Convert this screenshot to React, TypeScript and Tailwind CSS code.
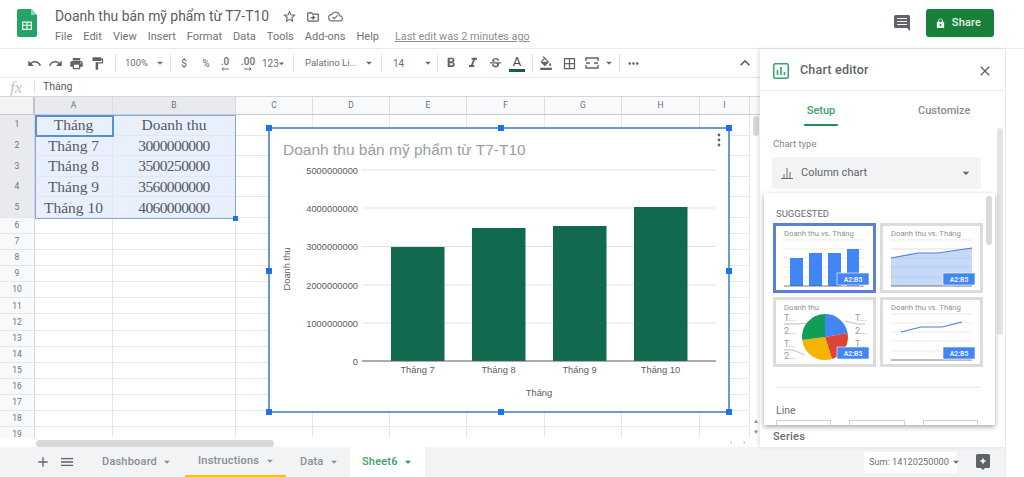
import {
    MdAdd,
    MdArrowDropDown,
    MdBorderAll,
    MdClose,
    MdExpandLess,
    MdFormatBold,
    MdFormatColorFill,
    MdFormatItalic,
    MdFormatPaint,
    MdLock,
    MdMenu,
    MdMoreHoriz,
    MdOutlineCloudDone,
    MdOutlineDriveFileMove,
    MdPrint,
    MdRedo,
    MdStarBorder,
    MdStrikethroughS,
    MdUndo,
} from 'react-icons/md';

const menus = ['File', 'Edit', 'View', 'Insert', 'Format', 'Data', 'Tools', 'Add-ons', 'Help'];
const columns = [
    { name: 'A', width: 78 },
    { name: 'B', width: 123 },
    { name: 'C', width: 77 },
    { name: 'D', width: 77 },
    { name: 'E', width: 77 },
    { name: 'F', width: 78 },
    { name: 'G', width: 77 },
    { name: 'H', width: 78 },
    { name: 'I', width: 50 },
];
const data = [
    ['Tháng', 'Doanh thu'],
    ['Tháng 7', '3000000000'],
    ['Tháng 8', '3500250000'],
    ['Tháng 9', '3560000000'],
    ['Tháng 10', '4060000000'],
];
const bars = [
    { label: 'Tháng 7', x: 391, top: 247 },
    { label: 'Tháng 8', x: 472, top: 228 },
    { label: 'Tháng 9', x: 553, top: 226 },
    { label: 'Tháng 10', x: 634, top: 207 },
];
const ticks = [
    { label: '5000000000', y: 170 },
    { label: '4000000000', y: 208 },
    { label: '3000000000', y: 246.5 },
    { label: '2000000000', y: 285 },
    { label: '1000000000', y: 323 },
];
const rowNumbers = Array.from({ length: 19 }, (_, i) => i + 1);
const handles = [
    'left-[-4px] top-[-4px]',
    'left-[228px] top-[-4px]',
    'right-[-4px] top-[-4px]',
    'left-[-4px] top-[139px]',
    'right-[-4px] top-[139px]',
    'left-[-4px] bottom-[-4px]',
    'left-[228px] bottom-[-4px]',
    'right-[-4px] bottom-[-4px]',
];

function Separator() {
    return <div className="mx-[5px] h-[18px] w-px shrink-0 bg-[#e0e2e4]" />;
}

function ToolIcon({ children, width = 21 }: { children: React.ReactNode; width?: number }) {
    return (
        <div className="flex h-full shrink-0 items-center justify-center text-[#5f6368]" style={{ width }}>
            {children}
        </div>
    );
}

function TinyArrow({ flip = false }: { flip?: boolean }) {
    return (
        <svg width="8" height="4" viewBox="0 0 8 4" fill="none" stroke="#5f6368" strokeWidth="0.9" className={flip ? 'rotate-180' : ''}>
            <path d="M8 2H1M2.500 .5L1 2l1.500 1.500" />
        </svg>
    );
}

function Toolbar() {
    return (
        <div className="flex h-[29px] shrink-0 items-center whitespace-nowrap border-b border-[#e3e4e6] pl-[24px] text-[10px] text-[#6b6f73]">
            <ToolIcon><MdUndo size={15} /></ToolIcon>
            <ToolIcon><MdRedo size={15} /></ToolIcon>
            <ToolIcon><MdPrint size={15} /></ToolIcon>
            <ToolIcon><MdFormatPaint size={15} /></ToolIcon>
            <div className="ml-[2px]"><Separator /></div>
            <span className="ml-[4px] w-[22px] text-[9.5px]">100%</span>
            <MdArrowDropDown size={14} className="ml-[6px]" />
            <div className="-ml-[2px]"><Separator /></div>
            <ToolIcon width={16}>$</ToolIcon>
            <div className="ml-[6px]"><ToolIcon width={16}>%</ToolIcon></div>
            <div className="ml-[4px] flex w-[14px] flex-col items-center font-medium leading-[11px]">
                .0<TinyArrow />
            </div>
            <div className="ml-[6px] flex w-[20px] flex-col items-center font-medium leading-[11px]">
                .00<TinyArrow flip />
            </div>
            <span className="ml-[4px] w-[16px]">123</span>
            <MdArrowDropDown size={13} className="-ml-[3px]" />
            <Separator />
            <span className="ml-[6px] w-[50px] text-[9.5px]">Palatino Li...</span>
            <MdArrowDropDown size={14} className="ml-[7px]" />
            <Separator />
            <span className="ml-[6px] w-[10px]">14</span>
            <MdArrowDropDown size={14} className="ml-[18px]" />
            <div className="-ml-[3px]"><Separator /></div>
            <ToolIcon width={16}><MdFormatBold size={16} /></ToolIcon>
            <div className="ml-[3px]"><ToolIcon width={22}><MdFormatItalic size={16} /></ToolIcon></div>
            <ToolIcon width={22}><MdStrikethroughS size={15} /></ToolIcon>
            <div className="flex w-[22px] flex-col items-center text-[#44474a]">
                <span className="text-[13px] leading-[13px]">A</span>
                <div className="mt-[1px] h-[3px] w-[16px] bg-[#1a5c46]" />
            </div>
            <div className="-ml-[1px]"><Separator /></div>
            <ToolIcon width={16}><MdFormatColorFill size={14} /></ToolIcon>
            <div className="ml-[4px]"><ToolIcon width={22}><MdBorderAll size={15} /></ToolIcon></div>
            <ToolIcon width={24}>
                <svg width="14" height="12" viewBox="0 0 14 12" fill="none" stroke="currentColor" strokeWidth="1.4">
                    <path d="M1 4V1h12v3M1 8v3h12V8M1 6h4M9 6h4" />
                </svg>
            </ToolIcon>
            <MdArrowDropDown size={14} className="-ml-[2px]" />
            <div className="-ml-[2px]"><Separator /></div>
            <ToolIcon width={16}><MdMoreHoriz size={15} /></ToolIcon>
            <div className="ml-auto mr-[5px] text-[#5f6368]"><MdExpandLess size={20} /></div>
        </div>
    );
}

function FormulaBar() {
    return (
        <div className="flex h-[18px] shrink-0 items-center">
            <span className="w-[34px] pl-[10px] font-['Liberation_Serif',serif] text-[17px] italic leading-none text-[#c4c7c9]">fx</span>
            <div className="h-[13px] w-px bg-[#e0e2e4]" />
            <span className="ml-[8px] text-[10.5px] text-[#55585c]">Tháng</span>
        </div>
    );
}

function SheetGrid() {
    return (
        <div className="relative flex-1 overflow-hidden border-t border-[#d5d7d9]">
            <div className="flex h-[18px] border-b border-[#c9cbce] bg-[#f8f9fa]">
                <div className="h-full w-[35px] shrink-0 border-r-[2px] border-[#c0c3c6] bg-[#f3f4f5]" />
                {columns.map((col) => (
                    <div
                        key={col.name}
                        className={`flex shrink-0 items-center justify-center border-r border-[#dcdee0] text-[8.5px] text-[#6f7275] ${col.name === 'A' || col.name === 'B' ? 'bg-[#e8eaed]' : ''}`}
                        style={{ width: col.width }}
                    >
                        {col.name}
                    </div>
                ))}
            </div>
            {rowNumbers.map((n) => (
                <div key={n} className={`flex border-b border-[#e6e7e8] ${n <= 5 ? 'h-[20.6px]' : 'h-[16.08px]'}`}>
                    <div className={`flex w-[35px] shrink-0 items-center justify-center border-r border-[#d6d8da] text-[8.5px] text-[#6f7275] ${n <= 5 ? 'bg-[#e8eaed]' : 'bg-[#f8f9fa]'}`}>
                        {n}
                    </div>
                    {columns.map((col, i) => (
                        <div
                            key={col.name}
                            className={`flex shrink-0 items-center justify-center border-r border-[#e6e7e8] font-['Liberation_Serif',serif] text-[15.5px] text-[#565b5f] ${n <= 5 && i < 2 ? 'bg-[#e8f0fe]' : ''} ${i === 1 && n > 1 ? 'tracking-[-0.6px]' : ''}`}
                            style={{ width: col.width }}
                        >
                            {n <= 5 && i < 2 ? data[n - 1][i] : null}
                        </div>
                    ))}
                </div>
            ))}

            {/* selected range */}
            <div className="absolute left-[35px] top-[18px] h-[104px] w-[201px] border border-[#7fa8de]">
                <div className="absolute left-[-1px] top-[-1px] h-[22px] w-[79px] border-[2px] border-[#5a90d8]" />
                <div className="absolute bottom-[-3px] right-[-3px] h-[5px] w-[5px] bg-[#1a73e8]" />
            </div>

            {/* chart */}
            <div className="absolute left-[268px] top-[30px] h-[286px] w-[462px] border-2 border-[#6a99d4] bg-white">
                <svg width="458" height="282" viewBox="270 129 458 282">
                    <text x="283" y="155" fontSize="15.500" fill="#9b9d9f" fontFamily="Liberation Sans, sans-serif">
                        Doanh thu bán mỹ phẩm từ T7-T10
                    </text>
                    {ticks.map((t) => (
                        <g key={t.label}>
                            <line x1="362" x2="716" y1={t.y} y2={t.y} stroke="#e2e3e3" />
                            <text x="358" y={t.y + 3.5} textAnchor="end" fontSize="9.3" fill="#5a5d60" fontFamily="Liberation Sans, sans-serif">
                                {t.label}
                            </text>
                        </g>
                    ))}
                    <text x="358" y="364.5" textAnchor="end" fontSize="9.3" fill="#5a5d60" fontFamily="Liberation Sans, sans-serif">0</text>
                    {bars.map((b) => (
                        <g key={b.label}>
                            <rect x={b.x} y={b.top} width="53.5" height={361 - b.top} fill="#116a4f" />
                            <text x={b.x + 26.5} y="373" textAnchor="middle" fontSize="9.3" fill="#5a5d60" fontFamily="Liberation Sans, sans-serif">
                                {b.label}
                            </text>
                        </g>
                    ))}
                    <line x1="362" x2="716" y1="361" y2="361" stroke="#55585a" />
                    <text x="539" y="396" textAnchor="middle" fontSize="9.3" fill="#5a5d60" fontFamily="Liberation Sans, sans-serif">Tháng</text>
                    <text x="290" y="269" textAnchor="middle" fontSize="9.3" fill="#5a5d60" fontFamily="Liberation Sans, sans-serif" transform="rotate(-90 290 269)">
                        Doanh thu
                    </text>
                    <g fill="#5f6368">
                        <circle cx="719" cy="135" r="1.4" />
                        <circle cx="719" cy="140" r="1.4" />
                        <circle cx="719" cy="145" r="1.4" />
                    </g>
                </svg>
                {handles.map((h) => (
                    <div key={h} className={`absolute h-[6px] w-[6px] bg-[#1a73e8] ${h}`} />
                ))}
            </div>

            {/* scroll bars */}
            <div className="absolute bottom-0 left-0 right-0 h-[9px] bg-white">
                <div className="absolute bottom-0 left-[36px] h-[7px] w-[238px] rounded-full bg-[#d6d8da]" />
                <span className="absolute bottom-0 left-[730px] text-[7px] leading-[8px] text-[#8a8d90]">‹</span>
                <span className="absolute bottom-0 left-[743px] text-[7px] leading-[8px] text-[#8a8d90]">›</span>
            </div>
            <div className="absolute bottom-0 right-0 top-[18px] w-[10px] bg-white">
                <div className="ml-[3px] mt-px h-[20px] w-[6px] rounded-full bg-[#d6d8da]" />
                <span className="absolute bottom-[23px] left-[3px] text-[6px] leading-none text-[#8a8d90]">▲</span>
                <span className="absolute bottom-[12px] left-[3px] text-[6px] leading-none text-[#8a8d90]">▼</span>
            </div>
        </div>
    );
}

function Badge({ x }: { x: number }) {
    return (
        <g>
            <rect x={x} y="50" width="32" height="12" fill="#4285f4" stroke="#fff" strokeWidth="0.6" />
            <text x={x + 16} y="59" textAnchor="middle" fontSize="6.8" fontWeight="700" fill="#e8f0fe" fontFamily="Roboto, sans-serif">
                A2:B5
            </text>
        </g>
    );
}

function ThumbLines({ title = 'Doanh thu vs. Tháng', x1 = 11, x2 = 92 }: { title?: string; x1?: number; x2?: number }) {
    return (
        <g>
            <text x={x1} y="13" fontSize="7.7" fill="#8f9194" fontFamily="Roboto, sans-serif">{title}</text>
            <line x1={x1} x2={x2} y1="17" y2="17" stroke="#dcdcdc" strokeWidth="0.7" />
        </g>
    );
}

function ThumbBars() {
    return (
        <svg viewBox="0 0 103 70" className="h-[70px] w-[103px]">
            <ThumbLines />
            {[26, 35, 44, 54].map((y) => (
                <line key={y} x1="11" x2="91" y1={y} y2={y} stroke="#e2e2e2" strokeWidth="0.7" />
            ))}
            <rect x="17" y="35" width="13" height="28" fill="#4285f4" />
            <rect x="36" y="30" width="13" height="33" fill="#4285f4" />
            <rect x="55" y="30" width="13" height="33" fill="#4285f4" />
            <rect x="74" y="26" width="12" height="37" fill="#4285f4" />
            <line x1="11" x2="91" y1="63" y2="63" stroke="#55585a" strokeWidth="0.8" />
            <Badge x={64} />
        </svg>
    );
}

function ThumbArea() {
    return (
        <svg viewBox="0 0 103 70" className="h-[70px] w-[103px]">
            <ThumbLines />
            <path d="M11 35 L38 30 L58 30 L92 25 V63 H11 Z" fill="#c6d9f8" />
            {[26, 35, 44, 54].map((y) => (
                <line key={y} x1="11" x2="92" y1={y} y2={y} stroke="#aebfd8" strokeWidth="0.5" />
            ))}
            <path d="M11 35 L38 30 L58 30 L92 25" fill="none" stroke="#4a80dc" strokeWidth="1.2" />
            <line x1="11" x2="92" y1="63" y2="63" stroke="#55585a" strokeWidth="0.8" />
            <Badge x={63} />
        </svg>
    );
}

function ThumbPie() {
    return (
        <svg viewBox="0 0 103 70" className="h-[70px] w-[103px]">
            <text x="11" y="13" fontSize="7.7" fill="#8f9194" fontFamily="Roboto, sans-serif">Doanh thu</text>
            <g fontSize="9" fill="#9a9c9e" fontFamily="Roboto, sans-serif">
                <text x="11" y="24">T...</text>
                <text x="11" y="37">2...</text>
                <text x="11" y="50">T...</text>
                <text x="11" y="62">2...</text>
                <text x="82" y="24">T...</text>
                <text x="82" y="37">2...</text>
                <text x="82" y="50">T...</text>
            </g>
            <g fill="none" stroke="#b5b6b8" strokeWidth="0.9">
                <path d="M11 27 H24 L34 26" />
                <path d="M11 53 H20 L32 58" />
                <path d="M92 27 H84 L72 24" />
            </g>
            <path d="M52 40 L52 17 A23 23 0 0 1 74.6 36 Z" fill="#4285f4" />
            <path d="M52 40 L74.6 36 A23 23 0 0 1 59 62 Z" fill="#db4437" />
            <path d="M52 40 L59 62 A23 23 0 0 1 29.2 43 Z" fill="#f4b400" />
            <path d="M52 40 L29.2 43 A23 23 0 0 1 52 17 Z" fill="#0f9d58" />
            <Badge x={64} />
        </svg>
    );
}

function ThumbLine() {
    return (
        <svg viewBox="0 0 103 70" className="h-[70px] w-[103px]">
            <ThumbLines />
            {[26, 35, 44, 54].map((y) => (
                <line key={y} x1="11" x2="92" y1={y} y2={y} stroke="#e2e2e2" strokeWidth="0.7" />
            ))}
            <path d="M21 35 L41 30 L62 30 L82 25" fill="none" stroke="#4a80dc" strokeWidth="1.2" />
            <line x1="11" x2="92" y1="63" y2="63" stroke="#55585a" strokeWidth="0.8" />
            <Badge x={63} />
        </svg>
    );
}

function ChartEditor() {
    return (
        <aside className="relative z-10 flex h-full w-[245px] shrink-0 flex-col bg-white shadow-[-2px_0_4px_rgba(0,0,0,0.1)]">
            <div className="flex h-[42px] shrink-0 items-center border-b border-[#e8eaed] pl-[13px] pr-[12px] pt-[2px]">
                <svg width="16" height="16" viewBox="0 0 16 16" fill="none">
                    <rect x="0.75" y="0.75" width="14.5" height="14.5" rx="1.5" stroke="#34a36b" strokeWidth="1.5" />
                    <path d="M4.5 7v5M8 4v8M11.5 9v3" stroke="#34a36b" strokeWidth="1.6" />
                </svg>
                <span className="ml-[11px] text-[12.5px] font-medium tracking-[0.2px] text-[#5f6368]">Chart editor</span>
                <MdClose size={16} className="ml-auto text-[#5f6368]" />
            </div>
            <div className="flex h-[38px] shrink-0 text-[11px] font-medium">
                <div className="ml-[44px] flex w-[34px] flex-col items-center pt-[12px] text-[#3c9f6c]">
                    Setup
                    <div className="mt-[4px] h-[2px] w-[34px] rounded-full bg-[#1e8e5a]" />
                </div>
                <div className="ml-[80px] pt-[12px] text-[#8a8d90]">Customize</div>
            </div>
            <div className="pl-[13px] pt-[8px] text-[9.5px] leading-[14px] text-[#85888b]">Chart type</div>
            <div className="ml-[12px] mt-[6px] flex h-[32px] w-[209px] items-center rounded-[3px] bg-[#f1f3f4] pl-[8px] pr-[7px] text-[11px] text-[#5f6368]">
                <svg width="14" height="12" viewBox="0 0 14 12" fill="none" stroke="#6b6f73" strokeWidth="1">
                    <path d="M1 11.5h12M4 11V7M7 11V1M10 11V5" />
                </svg>
                <span className="ml-[7px]">Column chart</span>
                <MdArrowDropDown size={16} className="ml-auto" />
            </div>
            <div className="absolute left-[237px] top-[79px] h-[207px] w-[6px] rounded-full bg-[#e3e4e5]" />
            <span className="absolute bottom-[2px] left-[13px] text-[11px] font-medium tracking-[0.2px] text-[#6b6e71]">Series</span>

            {/* chart type dropdown */}
            <div className="absolute left-[4px] top-[144px] h-[232px] w-[231px] overflow-hidden bg-white shadow-[0_2px_5px_rgba(0,0,0,0.35)]">
                <div className="absolute left-[222px] top-[3px] h-[49px] w-[6px] rounded-full bg-[#d9dadb]" />
                <div className="pl-[12px] pt-[15px] text-[9.5px] leading-[12px] text-[#6b6e71]">SUGGESTED</div>
                <div className="ml-[9px] mt-[3px] grid w-[213px] grid-cols-[103px_103px] gap-x-[4px] gap-y-[4px]">
                    <div className="h-[70px] w-[103px] outline-[3px] -outline-offset-3 outline-[#5b7fdc]"><ThumbBars /></div>
                    <div className="h-[70px] w-[103px] outline-[3px] -outline-offset-3 outline-[#dcdcdc]"><ThumbArea /></div>
                    <div className="h-[70px] w-[103px] outline-[3px] -outline-offset-3 outline-[#dcdcdc]"><ThumbPie /></div>
                    <div className="h-[70px] w-[103px] outline-[3px] -outline-offset-3 outline-[#dcdcdc]"><ThumbLine /></div>
                </div>
                <div className="ml-[12px] mt-[20px] h-px w-[204px] bg-[#e8eaed]" />
                <div className="pl-[12px] pt-[16px] text-[10.5px] leading-[13px] text-[#6b6e71]">Line</div>
                <div className="ml-[12px] mt-[3px] flex gap-[18px]">
                    <div className="h-[12px] w-[55px] border border-[#cfd1d3]" />
                    <div className="h-[12px] w-[56px] border border-[#cfd1d3]" />
                    <div className="h-[12px] w-[55px] border border-[#cfd1d3]" />
                </div>
            </div>
        </aside>
    );
}

function BottomBar() {
    return (
        <div className="flex h-[30px] shrink-0 items-center whitespace-nowrap bg-[#f1f3f4] text-[11px] font-medium tracking-[0.2px] text-[#8a8e92]">
            <MdAdd size={16} className="ml-[35px] text-[#5f6368]" />
            <MdMenu size={16} className="ml-[8px] text-[#5f6368]" />
            <div className="ml-[14px] flex h-full w-[96px] items-center pl-[13px]">
                Dashboard<MdArrowDropDown size={14} className="ml-[3px]" />
            </div>
            <div className="flex h-full w-[101px] items-center border-b-[2px] border-[#f4c20d] pl-[13px]">
                Instructions<MdArrowDropDown size={14} className="ml-[4px]" />
            </div>
            <div className="flex h-full w-[64px] items-center pl-[14px]">
                Data<MdArrowDropDown size={14} className="ml-[3px]" />
            </div>
            <div className="flex h-full w-[75px] items-center bg-white pl-[12px] text-[#3c9f6c]">
                Sheet6<MdArrowDropDown size={14} className="ml-[3px] text-[#1e8e5a]" />
            </div>
            <div className="ml-auto flex h-[21px] w-[93px] items-center rounded-[3px] bg-white pl-[5px] text-[9.2px] font-normal tracking-normal text-[#6b6e71]">
                Sum: 14120250000<MdArrowDropDown size={14} className="shrink-0" />
            </div>
            <svg className="ml-[19px] mr-[15px]" width="14" height="16" viewBox="0 0 14 16">
                <path d="M1.5 0h11A1.5 1.5 0 0 1 14 1.5v11a1.5 1.5 0 0 1-1.5 1.5H9l-2 2-2-2H1.5A1.5 1.5 0 0 1 0 12.5v-11A1.5 1.5 0 0 1 1.5 0z" fill="#5f6368" />
                <path d="M7 3.5l1 2.5 2.5 1-2.5 1-1 2.5-1-2.5L3.5 7 6 6z" fill="#fff" />
            </svg>
        </div>
    );
}

export default function App() {
    return (
        <div className="flex h-[477px] w-[1024px] flex-col overflow-hidden bg-white font-['Roboto',sans-serif]">
            <header className="flex h-[49px] shrink-0 border-b border-[#e8eaed]">
                <svg className="ml-[17px] mt-[9px]" width="20" height="28" viewBox="0 0 20 28">
                    <path d="M2 0h12l6 6v20a2 2 0 0 1-2 2H2a2 2 0 0 1-2-2V2a2 2 0 0 1 2-2z" fill="#23a566" />
                    <path d="M14 0l6 6h-6z" fill="#8ed1b1" />
                    <path d="M5 12.5h10V21H5z M6.3 13.8v1.9h3.1v-1.9z M10.6 13.8v1.9h3.1v-1.9z M6.3 16.8v2.9h3.1v-2.9z M10.6 16.8v2.9h3.1v-2.9z" fill="#f1f8f4" fillRule="evenodd" />
                </svg>
                <div className="ml-[18px] pt-[7px]">
                    <div className="flex h-[19px] items-center text-[#5a5e62]">
                        <span className="text-[13.9px]">Doanh thu bán mỹ phẩm từ T7-T10</span>
                        <MdStarBorder size={15} className="ml-[13px]" />
                        <MdOutlineDriveFileMove size={14} className="ml-[9px]" />
                        <MdOutlineCloudDone size={15} className="ml-[8px] text-[#75787c]" />
                    </div>
                    <div className="mt-[2px] flex h-[18px] items-center text-[11px] text-[#6f7276]">
                        <div className="flex gap-[11px]">
                            {menus.map((m) => (
                                <span key={m}>{m}</span>
                            ))}
                        </div>
                        <span className="ml-[16px] text-[10.8px] text-[#8a8d90] underline">Last edit was 2 minutes ago</span>
                    </div>
                </div>
                <svg className="ml-auto mt-[15px]" width="16" height="16" viewBox="0 0 16 16">
                    <path d="M1.5 0h13A1.5 1.5 0 0 1 16 1.5V16l-3-3H1.5A1.5 1.5 0 0 1 0 11.500v-10A1.500 1.500 0 0 1 1.500 0z" fill="#5f6368" />
                    <path d="M3 3.500h10M3 6.500h10M3 9.500h10" stroke="#fff" strokeWidth="1.200" />
                </svg>
                <div className="ml-[16px] mr-[30px] mt-[9px] flex h-[28px] w-[68px] items-center justify-center rounded-[3px] bg-[#188038] pr-[4px] text-[11px] font-medium tracking-[0.2px] text-[#e8f3ec]">
                    <MdLock size={11} className="mr-[6px]" />
                    Share
                </div>
            </header>
            <div className="flex min-h-0 flex-1">
                <div className="flex w-[1005px] shrink-0 flex-col">
                    <div className="flex min-h-0 flex-1">
                        <div className="flex w-[760px] shrink-0 flex-col">
                            <Toolbar />
                            <FormulaBar />
                            <SheetGrid />
                        </div>
                        <ChartEditor />
                    </div>
                    <BottomBar />
                </div>
                <div className="flex-1 border-l border-[#e8eaed]" />
            </div>
        </div>
    );
}
